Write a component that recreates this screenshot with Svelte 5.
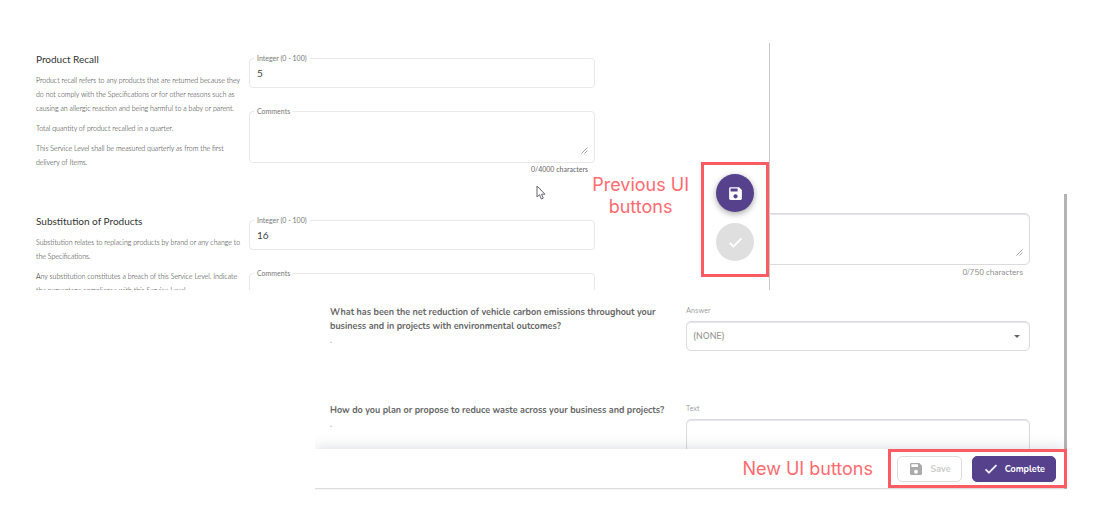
<script>
    let serviceLevels = [
        {
            id: "recall",
            title: "Product Recall",
            value: "5",
            counter: "0/4000 characters",
            text: [
                "Product recall refers to any products that are returned because they\ndo not comply with the Specifications or for other reasons such as\ncausing an allergic reaction and being harmful to a baby or parent.",
                "Total quantity of product recalled in a quarter.",
                "This Service Level shall be measured quarterly as from the first\ndelivery of Items."
            ]
        },
        {
            id: "substitution",
            title: "Substitution of Products",
            value: "16",
            text: [
                "Substitution relates to replacing products by brand or any change to\nthe Specifications.",
                "Any substitution constitutes a breach of this Service Level. Indicate\nthe percentage compliance with this Service Level."
            ]
        }
    ];
</script>

{#snippet saveIcon()}
    <svg viewBox="0 0 24 24" aria-hidden="true">
        <path fill="currentColor" d="M17 3H5a2 2 0 0 0-2 2v14a2 2 0 0 0 2 2h14a2 2 0 0 0 2-2V7l-4-4zm-5 16a3 3 0 1 1 0-6 3 3 0 0 1 0 6zm3-10H5V5h10v4z" />
    </svg>
{/snippet}

{#snippet checkIcon()}
    <svg viewBox="0 0 24 24" aria-hidden="true">
        <path fill="currentColor" stroke="currentColor" stroke-width="0.8" d="M9 16.2 4.8 12l-1.4 1.4L9 19 21 7l-1.4-1.4z" />
    </svg>
{/snippet}

{#snippet grip()}
    <svg class="grip" viewBox="0 0 7 7" aria-hidden="true">
        <path d="M0.5 6.5 6.5 0.5M3.5 6.5l3-3" stroke="#a0a0a0" stroke-width="1" fill="none" />
    </svg>
{/snippet}

<main class="stage">
    <section class="panel old-panel">
        <div class="old-content">
            {#each serviceLevels as level (level.id)}
                <article class="level">
                    <div class="level-text">
                        <h2>{level.title}</h2>
                        {#each level.text as paragraph}
                            <p>{paragraph}</p>
                        {/each}
                    </div>
                    <div class="level-fields">
                        <div class="outlined">
                            <label for="{level.id}-value">Integer (0 - 100)</label>
                            <input id="{level.id}-value" type="text" value={level.value} />
                        </div>
                        <div class="outlined comments">
                            <label for="{level.id}-comments">Comments</label>
                            <textarea id="{level.id}-comments"></textarea>
                            {@render grip()}
                        </div>
                        {#if level.counter}
                            <div class="counter">{level.counter}</div>
                        {/if}
                    </div>
                </article>
            {/each}
        </div>

        <svg class="cursor" viewBox="0 0 10 15" aria-hidden="true">
            <path d="M1 1v11l2.5-2.3L5.3 14l2-.9-1.8-3.9H9z" fill="#fff" stroke="#66666f" stroke-width="1" />
        </svg>

        <div class="note old-note">Previous UI<br />buttons</div>
        <div class="highlight old-buttons">
            <button class="fab" aria-label="Save">{@render saveIcon()}</button>
            <button class="fab fab-off" aria-label="Complete" disabled>{@render checkIcon()}</button>
        </div>
    </section>

    <section class="panel new-panel">
        <div class="new-content">
            <div class="question first">
                <div></div>
                <div>
                    <div class="box tall">
                        <textarea aria-label="Previous answer"></textarea>
                        {@render grip()}
                    </div>
                    <div class="counter">0/750 characters</div>
                </div>
            </div>
            <div class="question">
                <p>What has been the net reduction of vehicle carbon emissions throughout your<br />business and in projects with environmental outcomes?<br /><span class="dot">.</span></p>
                <div>
                    <label for="answer">Answer</label>
                    <div class="box">
                        <select id="answer">
                            <option>(NONE)</option>
                        </select>
                        <svg class="caret" viewBox="0 0 6 3" aria-hidden="true"><path d="M0 0h6L3 3z" fill="#666" /></svg>
                    </div>
                </div>
            </div>
            <div class="question">
                <p>How do you plan or propose to reduce waste across your business and projects?<br /><span class="dot">.</span></p>
                <div>
                    <label for="answer-text">Text</label>
                    <div class="box tall">
                        <textarea id="answer-text"></textarea>
                    </div>
                </div>
            </div>
        </div>
        <footer>
            <div class="note">New UI buttons</div>
            <div class="highlight new-buttons">
                <button class="action save" disabled>{@render saveIcon()}Save</button>
                <button class="action complete">{@render checkIcon()}Complete</button>
            </div>
        </footer>
    </section>
</main>

<style>
    :global(body) {
        margin: 0;
        background: white;
    }

    /* the two screens overlap in the middle cell */
    .stage {
        display: grid;
        grid-template-columns: 315fr 455fr 297fr 35fr;
        grid-template-rows: 151px 96px 199px;
        padding: 43px 0 20px;
        font-family: Lato, "Liberation Sans", sans-serif;
        color: #555;
    }

    .panel {
        position: relative;
        box-sizing: border-box;
        min-width: 0;
        background: white;
    }

    .old-panel {
        grid-area: 1 / 1 / 3 / 3;
        z-index: 1;
        border-right: 1px solid #c8c8c8;
    }

    .new-panel {
        grid-area: 2 / 2 / 4 / 4;
        display: flex;
        flex-direction: column;
        border-right: 3px solid #b3b3b3;
        font-family: Nunito, "Noto Sans", sans-serif;
    }

    .old-content {
        height: 100%;
        overflow: hidden;
    }

    .level {
        display: grid;
        grid-template-columns: 213fr 346fr 174fr;
        box-sizing: border-box;
        height: 162px;
        padding: 8px 0 0 36px;
    }

    h2 {
        margin: 0 0 6px;
        font-size: 10px;
        line-height: 16px;
        font-weight: 400;
        color: #333;
    }

    .level-text p {
        margin: 0 0 6px;
        font-size: 7px;
        line-height: 14px;
        font-weight: 300;
        white-space: pre;
        color: #222;
    }

    .outlined {
        position: relative;
        box-sizing: border-box;
        height: 30px;
        margin: 7px 0 23px;
        border: 1px solid #e8e8e8;
        border-radius: 4px;
    }

    .outlined label {
        position: absolute;
        top: -7px;
        left: 4px;
        padding: 0 3px;
        background: white;
        font-size: 7px;
        line-height: 12px;
        color: #777;
    }

    .comments {
        height: 52px;
        margin-bottom: 0;
    }

    input,
    textarea,
    select {
        display: block;
        box-sizing: border-box;
        width: 100%;
        height: 100%;
        padding: 0 7px;
        border: 0;
        background: transparent;
        font: inherit;
        font-size: 10px;
        color: #444;
        resize: none;
        appearance: none;
        outline: none;
    }

    .grip {
        position: absolute;
        right: 6px;
        bottom: 8px;
        width: 7px;
        height: 7px;
    }

    .counter {
        padding-right: 7px;
        font-size: 7px;
        line-height: 12px;
        text-align: right;
        color: #666;
    }

    .cursor {
        position: absolute;
        top: 142px;
        left: 536px;
        width: 10px;
        height: 15px;
    }

    .note {
        font-family: Inter, "Liberation Sans", sans-serif;
        font-size: 18px;
        line-height: 22px;
        text-align: center;
        color: #ff6b70;
    }

    .old-note {
        position: absolute;
        top: 131px;
        right: 80px;
    }

    .highlight {
        box-sizing: border-box;
        border: 3px solid #fb5c64;
    }

    .old-buttons {
        position: absolute;
        top: 119px;
        right: 0;
        display: flex;
        flex-direction: column;
        align-items: center;
        gap: 11px;
        width: 68px;
        padding: 9px 0 13px;
    }

    button {
        display: flex;
        align-items: center;
        justify-content: center;
        padding: 0;
        font: inherit;
    }

    .fab {
        width: 38px;
        height: 38px;
        border: 0;
        border-radius: 50%;
        background: #56428c;
        color: white;
        box-shadow: 0 2px 6px rgba(0, 0, 0, 0.35);
    }

    .fab svg {
        width: 17px;
        height: 17px;
    }

    .fab-off {
        background: #dfdfdf;
        box-shadow: none;
    }

    .new-content {
        height: 255px;
        padding: 19px 34px 0 15px;
        box-sizing: border-box;
        overflow: hidden;
    }

    .question {
        display: grid;
        grid-template-columns: 356fr 344fr;
        height: 98px;
    }

    .question.first {
        height: 92px;
    }

    .question p {
        margin: 0;
        font-size: 9px;
        line-height: 14px;
        font-weight: 700;
        white-space: nowrap;
        color: #666;
    }

    .question label {
        display: block;
        font-size: 7px;
        line-height: 12px;
        margin-bottom: 4px;
        color: #999;
    }

    .question .counter {
        padding-top: 2px;
        font-size: 8px;
        color: #888;
    }

    .dot {
        color: #bbb;
    }

    .box {
        position: relative;
        box-sizing: border-box;
        height: 30px;
        border: 1px solid #dadadf;
        border-radius: 5px;
        box-shadow: inset 0 1px 1px #e4e4e8;
    }

    .box.tall {
        height: 52px;
    }

    .box select {
        padding: 0 6px;
        font-size: 9px;
        font-weight: 600;
        color: #999;
    }

    .caret {
        position: absolute;
        top: 13px;
        right: 9px;
        width: 6px;
        height: 3px;
    }

    footer {
        position: relative;
        display: flex;
        flex: 1;
        align-items: stretch;
        justify-content: flex-end;
        gap: 15px;
        box-sizing: border-box;
        border-bottom: 1px solid #ddd;
        background: white;
        box-shadow: 0 -2px 12px rgba(90, 100, 120, 0.2);
        clip-path: inset(-20px -3px -1px 0);
    }

    footer .note {
        align-self: center;
    }

    /* the frame also covers the scrollbar */
    .new-buttons {
        display: flex;
        align-items: center;
        gap: 10px;
        padding: 0 8px 0 6px;
        margin-right: -3px;
    }

    .action {
        gap: 6px;
        height: 26px;
        padding: 0 10px;
        border: 1px solid #ddd;
        border-radius: 5px;
        background: white;
        font-size: 9px;
        font-weight: 700;
    }

    .action svg {
        width: 16px;
        height: 16px;
    }

    .save {
        width: 65px;
        color: #ccc;
    }

    .save svg {
        color: #aaa;
    }

    .complete {
        width: 84px;
        border-color: #56428c;
        background: #56428c;
        color: white;
    }
</style>
